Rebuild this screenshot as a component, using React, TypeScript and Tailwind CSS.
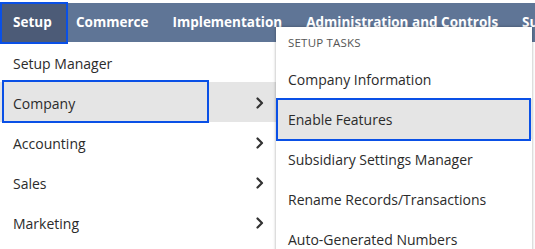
import React from "react";

const Chevron = () => (
  <svg width="8" height="12" viewBox="0 0 8 12" className="text-[#333]">
    <path d="M1.5 1.5 L6 6 L1.5 10.5" fill="none" stroke="currentColor" strokeWidth="2.2" strokeLinecap="round" strokeLinejoin="round" />
  </svg>
);

export default function App() {
  const navItems = ["Commerce", "Implementation", "Administration and Controls", "Support"];
  const leftItems = [
    { label: "Setup Manager", sub: false },
    { label: "Company", sub: true, active: true },
    { label: "Accounting", sub: true },
    { label: "Sales", sub: true },
    { label: "Marketing", sub: true },
  ];
  const tasks = [
    "Company Information",
    "Enable Features",
    "Subsidiary Settings Manager",
    "Rename Records/Transactions",
    "Auto-Generated Numbers",
  ];
  return (
    <div
      className="relative w-[535px] h-[249px] overflow-hidden bg-white"
      style={{ fontFamily: '"Open Sans", "Noto Sans", sans-serif' }}
    >
      <div className="mt-[3px] h-[39px] bg-[#5f7596] flex items-center whitespace-nowrap">
        <div className="ml-[2px] mr-[-2px] h-[38px] w-[64px] shrink-0 bg-[#4c5b77] flex items-center pl-[11px] text-white font-bold text-[13.5px] outline-2 outline-[#0a50e6]">
          Setup
        </div>
        {navItems.map((n) => (
          <div key={n} className="shrink-0 text-white font-bold text-[13.5px] px-[12px] h-[38px] flex items-center">
            {n}
          </div>
        ))}
      </div>
      <div className="w-[276px] flex flex-col">
        {leftItems.map((it) => (
          <div
            key={it.label}
            className={`relative h-[40px] flex items-center justify-between pl-[13px] pr-[12px] pt-[2px] text-[14px] text-[#2b2b2b] ${
              it.active ? "bg-[#e5e5e5]" : ""
            }`}
          >
            {it.active && (
              <div className="absolute left-[2px] top-[-2px] w-[207px] h-[43px] border-2 border-[#0a50e6]" />
            )}
            <span className="relative">{it.label}</span>
            {it.sub && <Chevron />}
          </div>
        ))}
      </div>
      <div className="absolute left-[276px] top-[27px] w-[256px] h-[240px] bg-white shadow-[0_0_3px_rgba(0,0,0,0.35)]">
        <div className="h-[32px] flex items-center pl-[12px] text-[11.5px] text-[#555] tracking-[0.2px]">
          SETUP TASKS
        </div>
        {tasks.map((t, i) => (
          <div
            key={t}
            className={`relative h-[40px] flex items-center pl-[12px] text-[14px] text-[#2b2b2b] ${
              i === 1 ? "bg-[#e5e5e5]" : ""
            }`}
          >
            {i === 1 && (
              <div className="absolute left-0 right-[1px] top-[-1px] bottom-[-2px] border-2 border-[#0a50e6]" />
            )}
            <span className="relative">{t}</span>
          </div>
        ))}
      </div>
    </div>
  );
}
